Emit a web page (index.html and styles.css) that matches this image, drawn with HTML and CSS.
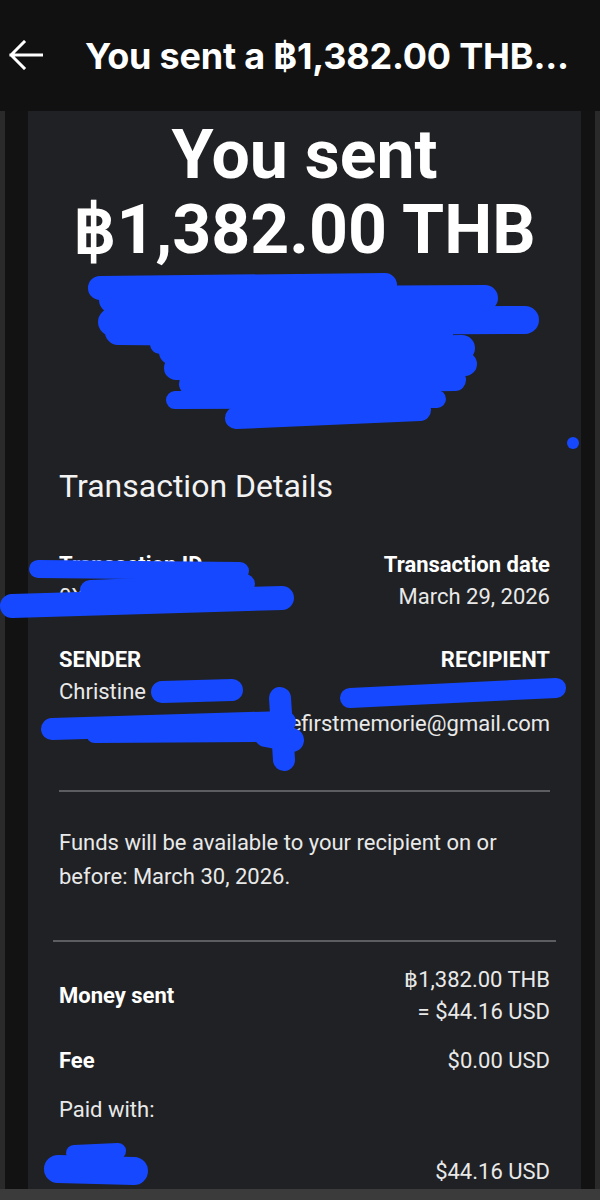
FILE: index.html
```html
<!DOCTYPE html>
<html lang="en">
<head>
<meta charset="utf-8">
<title>You sent a ฿1,382.00 THB payment</title>
<link rel="stylesheet" href="styles.css">
</head>
<body>
<header class="topbar">
  <svg class="back" width="34" height="30" viewBox="0 0 34 30" aria-hidden="true">
    <path d="M2 15 H33 M15 2 L2 15 L15 28" fill="none" stroke="#ffffff" stroke-width="3" stroke-linecap="square" stroke-linejoin="miter"/>
  </svg>
  <h1 class="topbar-title">You sent a ฿1,382.00 THB...</h1>
</header>
<div class="stage">
  <main class="card">
    <h2 class="hero">You sent<br>฿1,382.00 THB</h2>
    <div class="hero-sub"></div>
    <h3 class="section-title">Transaction Details</h3>

    <div class="pair">
      <div class="col">
        <div class="label">Transaction ID</div>
        <div class="value">0XX00000XX00000X4</div>
      </div>
      <div class="col col-right">
        <div class="label">Transaction date</div>
        <div class="value">March 29, 2026</div>
      </div>
    </div>

    <div class="pair pair-people">
      <div class="col">
        <div class="label">SENDER</div>
        <div class="value">Christine C</div>
        <div class="value">&nbsp;</div>
      </div>
      <div class="col col-right">
        <div class="label">RECIPIENT</div>
        <div class="value">&nbsp;</div>
        <div class="value">efirstmemorie@gmail.com</div>
      </div>
    </div>

    <hr class="rule">

    <p class="note">Funds will be available to your recipient on or before: March 30, 2026.</p>

    <hr class="rule rule-wide">

    <div class="line-item">
      <div class="label">Money sent</div>
      <div class="amount">
        <div>฿1,382.00 THB</div>
        <div>= $44.16 USD</div>
      </div>
    </div>
    <div class="line-item">
      <div class="label">Fee</div>
      <div class="amount">$0.00 USD</div>
    </div>
    <div class="paid-with">Paid with:</div>
    <div class="line-item line-last">
      <div class="value">&nbsp;</div>
      <div class="amount">$44.16 USD</div>
    </div>

    <svg class="scribbles" viewBox="28 111 553 1078" aria-hidden="true">
      <g fill="none" stroke="#1649ff" stroke-linecap="round" stroke-linejoin="round">
        <!-- large block under the heading -->
        <path d="M100 288 L385 285" stroke-width="24"/>
        <path d="M112 300 L485 298" stroke-width="26"/>
        <path d="M112 322 L525 320" stroke-width="28"/>
        <path d="M118 332 L440 335" stroke-width="26"/>
        <path d="M160 344 L300 342" stroke-width="20"/>
        <path d="M172 352 L462 348" stroke-width="26"/>
        <path d="M176 368 L465 364" stroke-width="24"/>
        <path d="M190 384 L455 380" stroke-width="22"/>
        <path d="M175 400 L437 399" stroke-width="18"/>
        <path d="M236 418 L420 410" stroke-width="22"/>
        <!-- transaction id -->
        <path d="M38 569 L240 571" stroke-width="18"/>
        <path d="M90 590 L245 584" stroke-width="20"/>
        <path d="M12 606 L282 598" stroke-width="24"/>
        <!-- sender name -->
        <path d="M162 692 L232 690" stroke-width="22"/>
        <!-- recipient name -->
        <path d="M350 698 L556 688" stroke-width="20"/>
        <!-- email -->
        <path d="M52 729 L285 722" stroke-width="22"/>
        <path d="M95 734 L255 733" stroke-width="18"/>
        <path d="M280 698 L284 760" stroke-width="22"/>
        <path d="M266 735 L292 740" stroke-width="24"/>
        <!-- paid with -->
        <path d="M58 1169 L134 1171" stroke-width="28"/>
        <path d="M74 1153 L118 1151" stroke-width="16"/>
      </g>
      <circle cx="573" cy="443" r="6" fill="#1649ff"/>
    </svg>
  </main>
</div>
<div class="bottom-strip"></div>
</body>
</html>
```
FILE: styles.css
```css
html, body {
  margin: 0;
  padding: 0;
  background: #121212;
}
body {
  width: 600px;
  height: 1200px;
  overflow: hidden;
  font-family: Roboto, "Liberation Sans", Arial, sans-serif;
  color: #ececec;
}

.topbar {
  height: 111px;
  background: #111111;
  display: flex;
  align-items: center;
  box-sizing: border-box;
  padding-left: 9px;
}
.back {
  display: block;
  flex: none;
  margin-top: -2px;
}
.topbar-title {
  margin: 0 0 0 42px;
  font-family: Inter, "Open Sans", sans-serif;
  font-weight: 700;
  font-size: 36px;
  letter-spacing: -0.2px;
  color: #ffffff;
  white-space: nowrap;
  line-height: 42px;
}

.stage {
  height: 1078px;
  background: #121212;
  border-left: 5px solid #2a2a2a;
  border-right: 5px solid #2a2a2a;
  padding: 0 14px 0 23px;
  box-sizing: border-box;
  width: 600px;
}

.card {
  position: relative;
  height: 1078px;
  background: #202124;
  box-sizing: border-box;
  padding: 7px 31px 0 31px;
}

.hero {
  margin: 0;
  text-align: center;
  font-weight: 700;
  font-size: 68px;
  line-height: 75px;
  color: #ffffff;
}
.hero-sub {
  height: 198px;
}

.section-title {
  margin: 0;
  font-weight: 400;
  font-size: 32px;
  line-height: 40px;
  color: #f2f2f2;
}

.pair {
  display: flex;
  justify-content: space-between;
  margin-top: 43px;
}
.pair-people {
  margin-top: 31px;
}
.col-right {
  text-align: right;
}
.label {
  font-weight: 700;
  font-size: 22px;
  line-height: 32px;
  color: #ffffff;
}
.value {
  font-size: 22px;
  line-height: 32px;
  color: #e9e9e9;
  white-space: nowrap;
}

.rule {
  border: 0;
  height: 2px;
  background: #5c5d60;
  margin: 50px 0 0 0;
}
.rule-wide {
  margin: 46px -6px 0 -6px;
}

.note {
  margin: 34px 0 0 0;
  font-size: 22px;
  line-height: 34px;
  color: #e9e9e9;
}

.line-item {
  display: flex;
  justify-content: space-between;
  align-items: center;
  margin-top: 17px;
}
.rule-wide + .line-item {
  margin-top: 22px;
}
.amount {
  text-align: right;
  font-size: 22px;
  line-height: 32px;
  color: #e9e9e9;
}
.paid-with {
  margin-top: 17px;
  font-size: 22px;
  line-height: 32px;
  color: #e9e9e9;
}
.line-last {
  margin-top: 30px;
}

.scribbles {
  position: absolute;
  left: 0;
  top: 0;
  width: 553px;
  height: 1078px;
  overflow: visible;
  pointer-events: none;
}

.bottom-strip {
  height: 11px;
  background: #3b3b3b;
}
```
